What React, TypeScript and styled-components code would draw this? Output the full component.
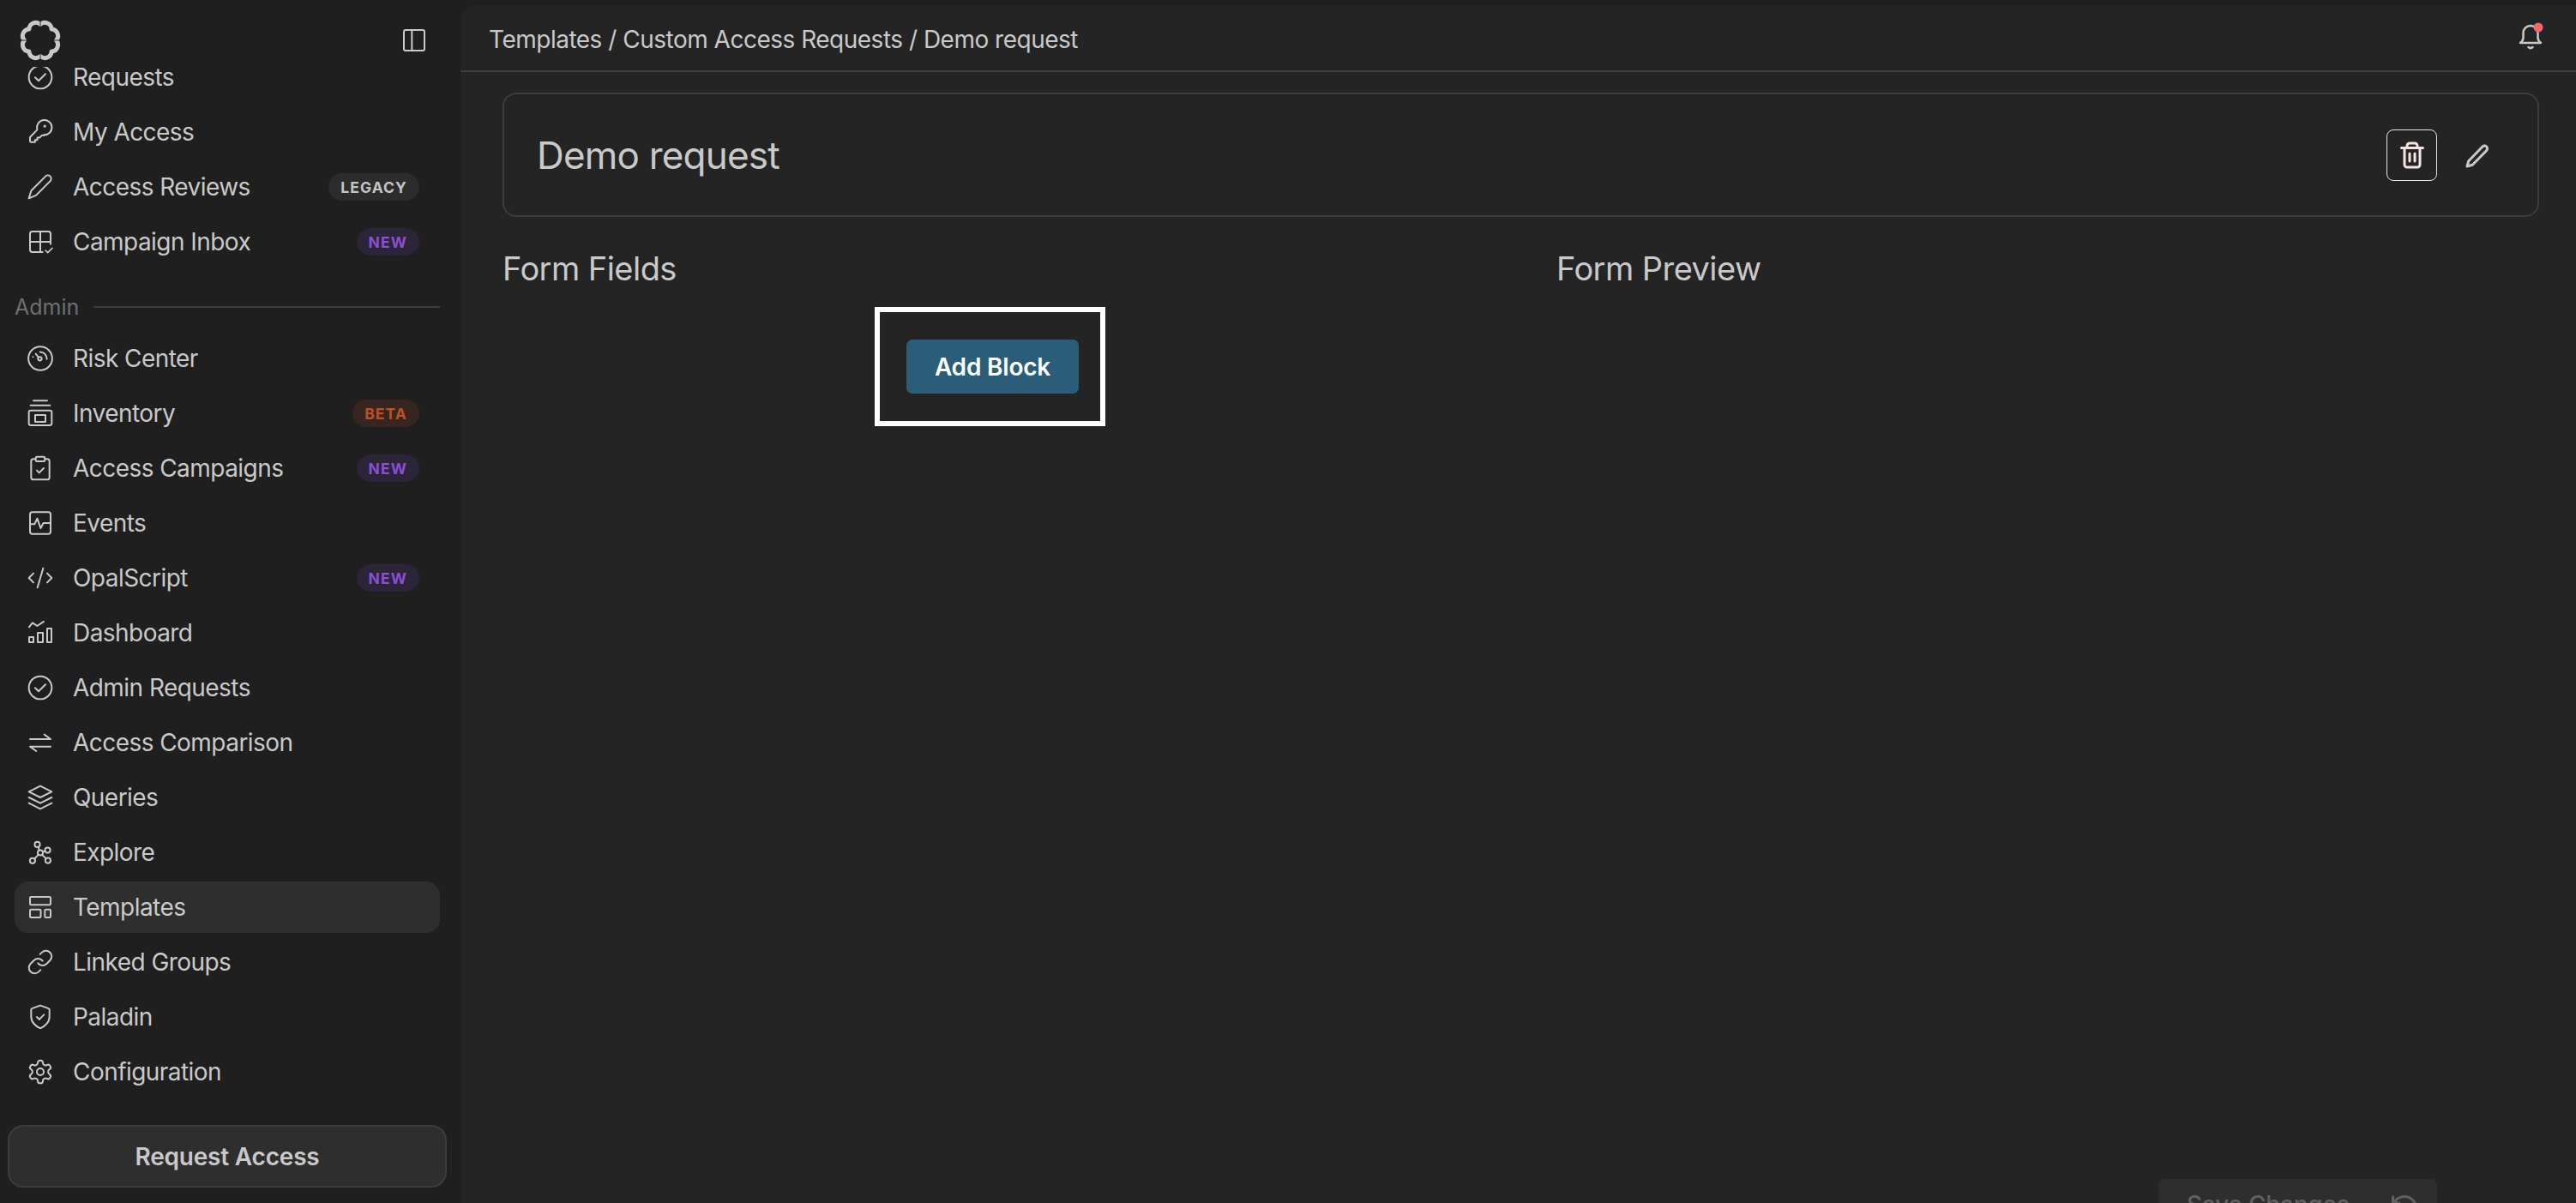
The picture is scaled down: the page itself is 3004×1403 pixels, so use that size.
import React from "react";
import styled, { createGlobalStyle } from "styled-components";

const GlobalStyle = createGlobalStyle`
  html, body, #root { margin: 0; padding: 0; height: 100%; }
  body {
    background: #1f1f1f;
    color: #c9c9c9;
    font-family: Inter, "Noto Sans", "Liberation Sans", sans-serif;
    -webkit-font-smoothing: antialiased;
  }
  * { box-sizing: border-box; }
`;

const Shell = styled.div`
  display: flex;
  height: 100vh;
  overflow: hidden;
`;

const Sidebar = styled.aside`
  flex: 0 0 537px;
  display: flex;
  flex-direction: column;
  background: #1f1f1f;
  padding-bottom: 18px;
`;

const SideTop = styled.div`
  position: relative;
  z-index: 1;
  flex: 0 0 78px;
  display: flex;
  align-items: flex-start;
  justify-content: space-between;
  padding: 23px 38px 0 23px;
`;

const Logo = styled.svg`
  width: 48px;
  height: 48px;
  fill: none;
  overflow: visible;
  background: transparent;
`;

const Collapse = styled.svg`
  width: 32px;
  height: 32px;
  margin-top: 8px;
  fill: none;
  stroke: #c9c9c9;
  stroke-width: 1.5;
`;

const NavClip = styled.nav`
  flex: 1;
  min-height: 0;
  overflow: hidden;
`;

const NavList = styled.div`
  display: flex;
  flex-direction: column;
  gap: 4px;
  margin-top: -18px;
  padding: 0 24px 0 17px;
`;

const NavRow = styled.a<{ $active?: boolean }>`
  display: flex;
  align-items: center;
  height: 60px;
  padding: 0 24px 0 14px;
  gap: 22px;
  border-radius: 16px;
  background: ${(p) => (p.$active ? "#2e2e2e" : "transparent")};
  font-size: 28px;
  font-weight: 400;
  letter-spacing: -0.55px;
  color: #c9c9c9;
`;

const NavIcon = styled.svg`
  flex: 0 0 32px;
  width: 32px;
  height: 32px;
  fill: none;
  stroke: #c9c9c9;
  stroke-width: 1.5;
  stroke-linecap: round;
  stroke-linejoin: round;
`;

const NavLabel = styled.span`
  flex: 1;
  white-space: nowrap;
`;

const badgeTones = {
  legacy: { bg: "#2c2c2c", fg: "#c4c4c4" },
  new: { bg: "#2c2437", fg: "#8a4fd3" },
  beta: { bg: "#37261f", fg: "#c14f24" },
};

const Badge = styled.span<{ $tone: keyof typeof badgeTones }>`
  display: inline-flex;
  align-items: center;
  height: 32px;
  padding: 0 14px;
  border-radius: 16px;
  background: ${(p) => badgeTones[p.$tone].bg};
  color: ${(p) => badgeTones[p.$tone].fg};
  font-size: 17.5px;
  font-weight: 700;
  letter-spacing: 1.1px;
`;

const SectionHead = styled.div`
  display: flex;
  align-items: center;
  gap: 17px;
  height: 40px;
  margin: 22px 0 6px;
  font-size: 25px;
  color: #6f6f6f;
`;

const SectionRule = styled.div`
  flex: 1;
  height: 2px;
  background: #3d3d3d;
`;

const RequestButton = styled.button`
  flex: 0 0 73px;
  margin: 0 16px 0 9px;
  border: 2px solid #3d3d3d;
  border-radius: 18px;
  background: #2e2e2e;
  color: #c9c9c9;
  font: 600 28px Inter, "Noto Sans", sans-serif;
  letter-spacing: -0.2px;
`;

const Main = styled.main`
  flex: 1;
  min-width: 0;
  display: flex;
  flex-direction: column;
  margin-top: 7px;
  background: #242424;
  border-top-left-radius: 16px;
`;

const TopBar = styled.header`
  flex: 0 0 77px;
  display: flex;
  align-items: center;
  justify-content: space-between;
  padding: 0 38px 3px 33px;
  border-bottom: 2px solid #3d3d3d;
`;

const Crumbs = styled.div`
  margin-top: 6px;
  font-size: 28px;
  letter-spacing: -0.5px;
  color: #c9c9c9;
`;

const Bell = styled.svg`
  width: 30px;
  height: 32px;
  fill: none;
  stroke: #c9c9c9;
  stroke-width: 2.5;
  stroke-linecap: round;
  stroke-linejoin: round;
  overflow: visible;
`;

const Content = styled.section`
  flex: 1;
  min-height: 0;
  padding: 24px 43px 0 49px;
`;

const TitleCard = styled.div`
  display: flex;
  align-items: center;
  justify-content: space-between;
  height: 145px;
  padding: 0 54px 0 38px;
  border: 2px solid #3d3d3d;
  border-radius: 16px;
`;

const Title = styled.h1`
  margin: 0;
  font-size: 44px;
  font-weight: 400;
  letter-spacing: -0.8px;
  color: #c9c9c9;
`;

const CardActions = styled.div`
  display: flex;
  align-items: center;
  gap: 33px;
`;

const TrashButton = styled.button`
  display: flex;
  align-items: center;
  justify-content: center;
  width: 59px;
  height: 60px;
  padding: 0;
  border: 1.5px solid #f5e3e3;
  border-radius: 8px;
  background: transparent;
`;

const ActionIcon = styled.svg<{ $color: string }>`
  width: 30px;
  height: 32px;
  fill: none;
  stroke: ${(p) => p.$color};
  stroke-width: 3;
  stroke-linecap: round;
  stroke-linejoin: round;
`;

const Columns = styled.div`
  display: grid;
  grid-template-columns: 1146px 1fr;
  column-gap: 83px;
  margin-top: 38px;
`;

const ColumnTitle = styled.h2`
  margin: 0;
  height: 44px;
  font-size: 38px;
  line-height: 44px;
  font-weight: 400;
  letter-spacing: -0.55px;
  color: #c9c9c9;
`;

const Highlight = styled.div`
  width: 269px;
  margin: 23px 0 0 434px;
  padding: 32px 25px 32px 31px;
  border: 6px solid #ffffff;
`;

const AddBlock = styled.button`
  display: block;
  width: 201px;
  height: 63px;
  padding: 0;
  border: 0;
  border-radius: 7px;
  background: #2a5d78;
  color: #ffffff;
  font: 600 28px Inter, "Noto Sans", sans-serif;
  letter-spacing: -0.2px;
`;

const SaveBar = styled.footer`
  flex: 0 0 28px;
  display: flex;
  justify-content: flex-end;
  padding-right: 162px;
  overflow: hidden;
`;

const SaveButton = styled.button`
  flex: 0 0 325px;
  display: flex;
  align-items: center;
  justify-content: space-between;
  height: 60px;
  padding: 0 20px 0 33px;
  border: 0;
  border-radius: 8px;
  background: #2e2e2e;
  color: #606060;
  font: 500 28px Inter, "Noto Sans", sans-serif;
  letter-spacing: -0.2px;
`;

const UndoIcon = styled.svg`
  width: 36px;
  height: 36px;
  margin-top: 7px;
  fill: none;
  stroke: #606060;
  stroke-width: 2;
  stroke-linecap: round;
  stroke-linejoin: round;
`;

const petalPath = (() => {
  const c = 24;
  const valley = 18.5;
  const radius = 7.8;
  const n = 8;
  let d = "";
  for (let i = 0; i <= n; i++) {
    const a = ((i * 360) / n - 90) * (Math.PI / 180);
    const x = (c + valley * Math.cos(a)).toFixed(2);
    const y = (c + valley * Math.sin(a)).toFixed(2);
    d += i === 0 ? `M${x} ${y}` : ` A${radius} ${radius} 0 0 1 ${x} ${y}`;
  }
  return `${d}Z`;
})();

const icons: Record<string, React.ReactNode> = {
  check: (
    <>
      <circle cx="12" cy="12" r="10" />
      <path d="M7.5 12.2l3 3 6-6" />
    </>
  ),
  key: (
    <>
      <path d="M15 15a6.5 6.5 0 1 0-6.2-5.2c.1.5.1.7-.3 1.1L3 16.6c-.3.3-.4.5-.4.9v2.9c0 .6.4 1 1 1H7v-2h2v-2h2l1.6-1.6c.4-.4.6-.5 1.1-.4.4 0 .8.1 1.3.1Z" transform="translate(0.4 -0.5)" />
      <circle cx="15.9" cy="6.9" r="0.5" />
    </>
  ),
  pencil: <path d="M2 22l1.900-6.200c.1-.4.3-.7.6-1L16.600 2.700a2.900 2.900 0 0 1 4.100 4.100L8.600 19c-.3.3-.6.5-1 .6L2 22Z" />,
  inbox: (
    <>
      <path d="M21 14V5a2 2 0 0 0-2-2H5a2 2 0 0 0-2 2v14a2 2 0 0 0 2 2h9" />
      <path d="M3 12h18M12 3v18" />
      <path d="M16.500 19.500l2 2 4-4" strokeWidth="1.2" />
    </>
  ),
  gauge: (
    <>
      <circle cx="12" cy="12" r="10.4" />
      <circle cx="11.6" cy="12.2" r="1.6" />
      <path d="M11.800 6.300a6 6 0 0 1 5.900 6.200M8 8l2.400 3M5.600 10.600v.1" />
    </>
  ),
  inventory: (
    <>
      <path d="M6 1h12M3.500 5h17" />
      <rect x="2" y="9.5" width="20" height="13" rx="1.6" />
      <rect x="7.5" y="13.5" width="9" height="6" />
    </>
  ),
  clipboard: (
    <>
      <rect x="8" y="2" width="8" height="4" rx="1" />
      <path d="M16 4h2a2 2 0 0 1 2 2v14a2 2 0 0 1-2 2H6a2 2 0 0 1-2-2V6a2 2 0 0 1 2-2h2" />
      <path d="M9 14l2 2 4-4" />
    </>
  ),
  events: (
    <>
      <rect x="3" y="2.5" width="18" height="19" rx="2" />
      <path d="M3 13h4l2.300-5 3 8.500 2.400-4.500H21" />
    </>
  ),
  code: <path d="M18 16l4-4-4-4M6 8l-4 4 4 4M14.500 3.500l-5 17" />,
  dashboard: (
    <>
      <path d="M2.200 7l3-3.700 4.100 2.700L15 2.200" />
      <rect x="2.25" y="15.75" width="3.75" height="4.5" />
      <rect x="9.75" y="12" width="4.5" height="8.25" />
      <rect x="18" y="8.25" width="3.75" height="12" />
    </>
  ),
  swap: <path d="M3 9h18l-5.500-4M21 15.500H3l5.500 4" />,
  layers: (
    <>
      <path d="M2 7l10-5 10 5-10 5L2 7Z" />
      <path d="M2 12l10 5 10-5M2 17l10 5 10-5" />
    </>
  ),
  explore: (
    <>
      <circle cx="9.4" cy="5.2" r="2.3" />
      <circle cx="18.4" cy="10.2" r="2.3" />
      <circle cx="12" cy="12.4" r="2.3" />
      <circle cx="5.2" cy="19.4" r="2.3" />
      <circle cx="18.7" cy="19.2" r="2.3" />
      <path d="M10.300 7.300l.8 3M16.200 10.800l-2 .9M10.400 14l-3.500 3.700M13.600 14.100l3.400 3.400" />
    </>
  ),
  templates: (
    <>
      <rect x="3" y="3" width="18" height="7" rx="1" />
      <rect x="3" y="14" width="9.4" height="7" rx="1" />
      <rect x="16" y="14" width="5" height="7" rx="1" />
    </>
  ),
  link: (
    <>
      <path d="M10 13a5 5 0 0 0 7.540.54l3-3a5 5 0 0 0-7.070-7.070l-1.720 1.710" />
      <path d="M14 11a5 5 0 0 0-7.540-.54l-3 3a5 5 0 0 0 7.070 7.070l1.710-1.710" />
    </>
  ),
  shield: (
    <>
      <path d="M12 2l7.200 2.600c.5.2.8.6.8 1.100V12c0 5-4.600 8.400-7.300 9.600-.5.2-.9.2-1.400 0C8.600 20.400 4 17 4 12V5.700c0-.5.3-.9.8-1.100L12 2Z" />
      <path d="M9 12l2.200 2.200L15.200 10" />
    </>
  ),
  gear: (
    <>
      <path d="M12.220 2h-.44a2 2 0 0 0-2 2v.18a2 2 0 0 1-1 1.730l-.43.25a2 2 0 0 1-2 0l-.15-.08a2 2 0 0 0-2.730.73l-.22.38a2 2 0 0 0 .73 2.730l.15.1a2 2 0 0 1 1 1.720v.51a2 2 0 0 1-1 1.740l-.15.09a2 2 0 0 0-.73 2.730l.22.38a2 2 0 0 0 2.730.73l.15-.08a2 2 0 0 1 2 0l.43.25a2 2 0 0 1 1 1.730V20a2 2 0 0 0 2 2h.44a2 2 0 0 0 2-2v-.18a2 2 0 0 1 1-1.730l.43-.25a2 2 0 0 1 2 0l.15.08a2 2 0 0 0 2.730-.73l.22-.39a2 2 0 0 0-.73-2.730l-.15-.08a2 2 0 0 1-1-1.740v-.5a2 2 0 0 1 1-1.740l.15-.09a2 2 0 0 0 .73-2.730l-.22-.38a2 2 0 0 0-2.730-.73l-.15.08a2 2 0 0 1-2 0l-.43-.25a2 2 0 0 1-1-1.730V4a2 2 0 0 0-2-2z" />
      <circle cx="12" cy="12" r="3" />
    </>
  ),
};

type Item = { label: string; icon: string; badge?: keyof typeof badgeTones; active?: boolean };

const topItems: Item[] = [
  { label: "Requests", icon: "check" },
  { label: "My Access", icon: "key" },
  { label: "Access Reviews", icon: "pencil", badge: "legacy" },
  { label: "Campaign Inbox", icon: "inbox", badge: "new" },
];

const adminItems: Item[] = [
  { label: "Risk Center", icon: "gauge" },
  { label: "Inventory", icon: "inventory", badge: "beta" },
  { label: "Access Campaigns", icon: "clipboard", badge: "new" },
  { label: "Events", icon: "events" },
  { label: "OpalScript", icon: "code", badge: "new" },
  { label: "Dashboard", icon: "dashboard" },
  { label: "Admin Requests", icon: "check" },
  { label: "Access Comparison", icon: "swap" },
  { label: "Queries", icon: "layers" },
  { label: "Explore", icon: "explore" },
  { label: "Templates", icon: "templates", active: true },
  { label: "Linked Groups", icon: "link" },
  { label: "Paladin", icon: "shield" },
  { label: "Configuration", icon: "gear" },
];

const Row = ({ item }: { item: Item }) => (
  <NavRow $active={item.active}>
    <NavIcon viewBox="0 0 24 24">{icons[item.icon]}</NavIcon>
    <NavLabel>{item.label}</NavLabel>
    {item.badge && <Badge $tone={item.badge}>{item.badge.toUpperCase()}</Badge>}
  </NavRow>
);

export default function App() {
  return (
    <>
      <GlobalStyle />
      <Shell>
        <Sidebar>
          <SideTop>
            <Logo viewBox="0 0 48 48">
              <path d={petalPath} stroke="#c9c9c9" strokeWidth="5" strokeLinejoin="round" />
              <path d="M24 1v9M24 38v9M1 24h9M38 24h9" stroke="#1f1f1f" strokeWidth="0.9" />
            </Logo>
            <Collapse viewBox="0 0 24 24">
              <rect x="3" y="3" width="18" height="18" rx="1.5" />
              <path d="M10 3v18" />
            </Collapse>
          </SideTop>
          <NavClip>
            <NavList>
              {topItems.map((item) => (
                <Row key={item.label} item={item} />
              ))}
              <SectionHead>
                Admin
                <SectionRule />
              </SectionHead>
              {adminItems.map((item) => (
                <Row key={item.label} item={item} />
              ))}
            </NavList>
          </NavClip>
          <RequestButton>Request Access</RequestButton>
        </Sidebar>
        <Main>
          <TopBar>
            <Crumbs>Templates / Custom Access Requests / Demo request</Crumbs>
            <Bell viewBox="0 0 30 32">
              <path d="M3 23c2-1.600 3.500-3 3.500-6v-5.500a8.500 8.500 0 0 1 17 0V17c0 3 1.500 4.400 3.500 6Z" />
              <path d="M12.500 28c1.500 1.300 3.500 1.300 5 0" />
              <circle cx="24" cy="5" r="5.5" fill="#ee6a6a" stroke="none" />
            </Bell>
          </TopBar>
          <Content>
            <TitleCard>
              <Title>Demo request</Title>
              <CardActions>
                <TrashButton>
                  <ActionIcon $color="#f5e3e3" viewBox="0 0 30 32">
                    <path d="M2.500 7.500h25M9 7V5a3 3 0 0 1 3-3h6a3 3 0 0 1 3 3v2M6 8v19a3 3 0 0 0 3 3h12a3 3 0 0 0 3-3V8M12 14v9M18 14v9" />
                  </ActionIcon>
                </TrashButton>
                <ActionIcon $color="#c9c9c9" viewBox="0 0 30 32">
                  <path d="M2 29l1.800-6.300L20 6a3.200 3.200 0 0 1 4.600 4.600L8.300 27.200 2 29Z" />
                </ActionIcon>
              </CardActions>
            </TitleCard>
            <Columns>
              <div>
                <ColumnTitle>Form Fields</ColumnTitle>
                <Highlight>
                  <AddBlock>Add Block</AddBlock>
                </Highlight>
              </div>
              <div>
                <ColumnTitle>Form Preview</ColumnTitle>
              </div>
            </Columns>
          </Content>
          <SaveBar>
            <SaveButton>
              Save Changes
              <UndoIcon viewBox="0 0 24 24">
                <path d="M3 12a9 9 0 1 0 9-9 9.750 9.750 0 0 0-6.740 2.740L3 8" />
                <path d="M3 3v5h5" />
              </UndoIcon>
            </SaveButton>
          </SaveBar>
        </Main>
      </Shell>
    </>
  );
}
